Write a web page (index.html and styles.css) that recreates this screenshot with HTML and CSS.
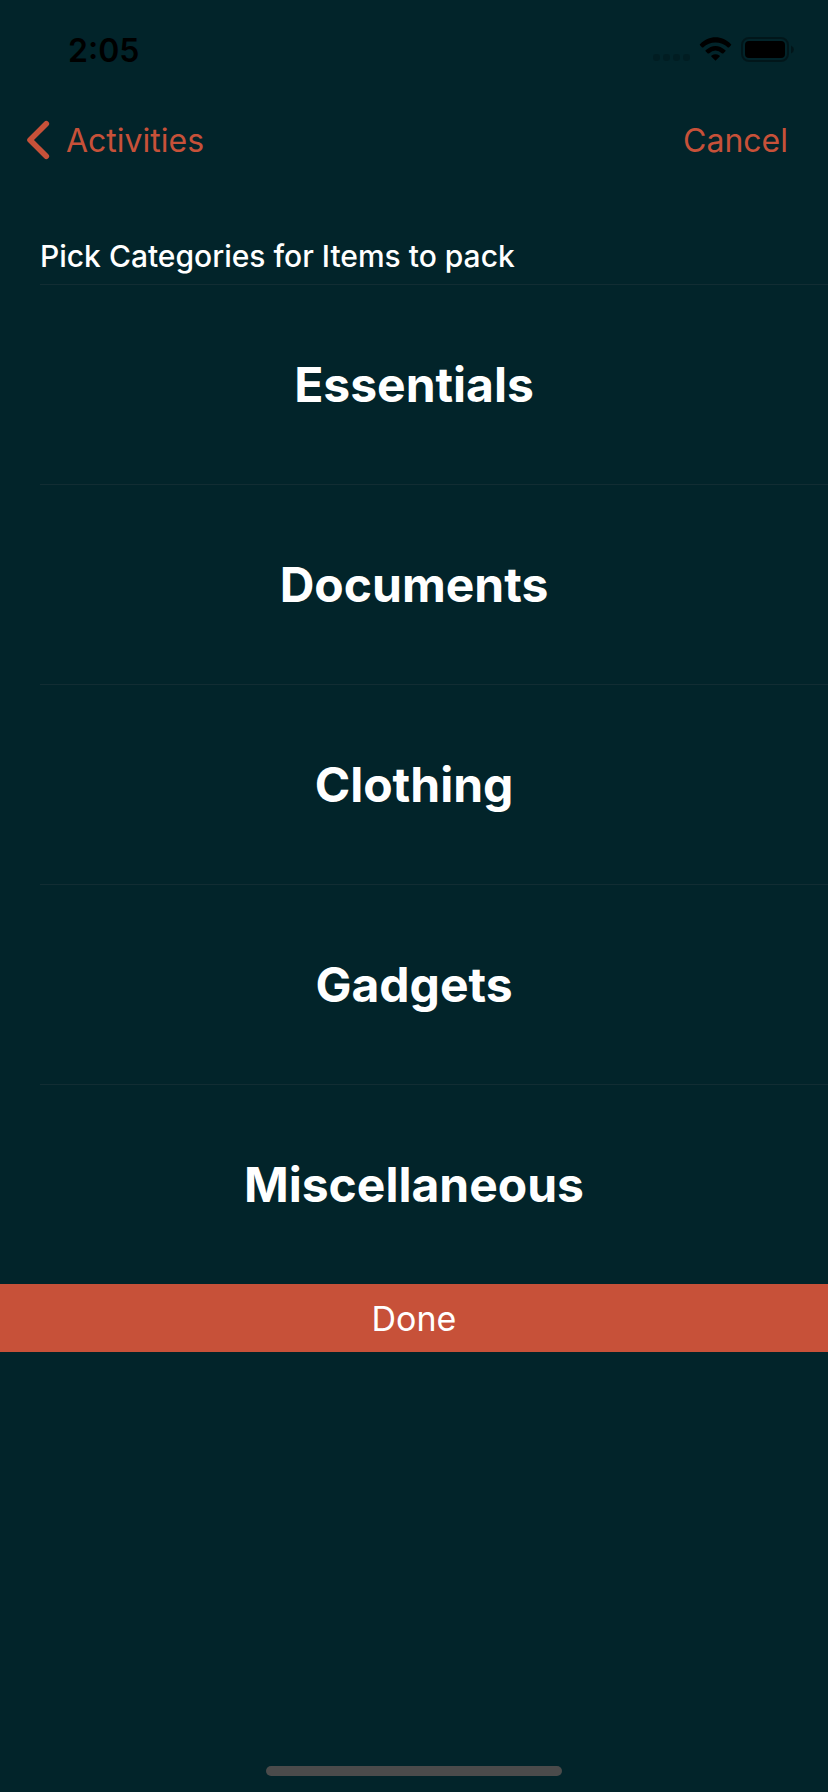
FILE: index.html
```html
<!DOCTYPE html>
<html lang="en">
<head>
<meta charset="utf-8">
<meta name="viewport" content="width=device-width, initial-scale=1">
<title>Pick Categories</title>
<link rel="stylesheet" href="styles.css">
</head>
<body>
<div class="screen">
  <header class="status">
    <time class="clock">2:05</time>
    <svg class="status-icons" width="142" height="28" viewBox="0 0 142 28" aria-hidden="true">
      <g fill="#000" fill-opacity=".18">
        <rect x="1" y="18" width="7" height="7" rx="2.4"/>
        <rect x="11" y="18" width="7" height="7" rx="2.4"/>
        <rect x="21" y="18" width="7" height="7" rx="2.4"/>
        <rect x="31" y="18" width="7" height="7" rx="2.4"/>
      </g>
      <path d="M63.5 24.8 59.3 20.6Q58.9 20 59.6 19.6Q63.5 16.8 67.4 19.6Q68.1 20 67.7 20.6Z"/>
      <path d="M53.6 14.3Q63.5 5.8 73.4 14.3Q73.9 14.8 73.4 15.3L71.2 17.4Q70.7 17.8 70.1 17.4Q63.5 11.8 56.9 17.4Q56.3 17.8 55.8 17.4L53.6 15.3Q53.1 14.8 53.6 14.3Z"/>
      <path d="M48 8.2C56.6-1.1 70.4-1.1 79 8.2Q79.5 8.7 79 9.2L76.9 11.4Q76.4 11.8 75.9 11.4C69 4.8 58 4.8 51.1 11.4Q50.6 11.8 50.1 11.4L48 9.2Q47.5 8.7 48 8.2Z"/>
      <rect x="90" y="2" width="46" height="23" rx="7" fill="none" stroke="#000" stroke-opacity=".38" stroke-width="2"/>
      <rect x="93" y="5" width="40" height="17" rx="4"/>
      <path d="M139 9.5Q142 11 142 13.5Q142 16 139 17.5Z" fill-opacity=".4"/>
    </svg>
  </header>
  <nav class="navbar">
    <button class="nav-button" type="button">
      <svg width="24" height="40" viewBox="0 0 24 40" aria-hidden="true"><path d="M20.300 3.700 4 20 20.300 36.300" fill="none" stroke="currentColor" stroke-width="5.600" stroke-linecap="round" stroke-linejoin="round"/></svg>
      <span>Activities</span>
    </button>
    <button class="nav-button" type="button">Cancel</button>
  </nav>
  <main>
    <h1 class="title">Pick Categories for Items to pack</h1>
    <ul class="categories">
      <li><button class="category" type="button">Essentials</button></li>
      <li><button class="category" type="button">Documents</button></li>
      <li><button class="category" type="button">Clothing</button></li>
      <li><button class="category" type="button">Gadgets</button></li>
      <li><button class="category" type="button">Miscellaneous</button></li>
    </ul>
    <button class="done" type="button">Done</button>
  </main>
  <div class="home-indicator"></div>
</div>
</body>
</html>
```
FILE: styles.css
```css
* {
  box-sizing: border-box;
}

body {
  margin: 0;
  background: #02242a;
  color: #fff;
  font-family: Inter, "Liberation Sans", sans-serif;
}

button {
  margin: 0;
  padding: 0;
  border: 0;
  background: none;
  color: inherit;
  font: inherit;
  cursor: pointer;
}

.screen {
  display: flex;
  flex-direction: column;
  min-height: 100vh;
}

.status {
  display: flex;
  justify-content: space-between;
  align-items: center;
  height: 100px;
  padding: 0 34px 0 68px;
  color: #000;
}

.clock {
  font-size: 32px;
  font-weight: 600;
}

.navbar {
  display: flex;
  justify-content: space-between;
  align-items: center;
  height: 80px;
  padding: 0 40px 0 26px;
  color: #c75139;
  font-size: 32px;
}

.nav-button {
  display: flex;
  align-items: center;
  gap: 16px;
}

.title {
  margin: 0;
  padding: 56px 40px 8px;
  font-size: 30px;
  font-weight: 500;
  line-height: 40px;
}

.categories {
  margin: 0 0 0 40px;
  padding: 0;
  border-top: 1px solid #122d33;
  list-style: none;
}

.categories li + li {
  border-top: 1px solid #122d33;
}

.category {
  display: block;
  width: 100%;
  height: 199px;
  padding-right: 40px;
  font-size: 48px;
  font-weight: 700;
}

.done {
  display: block;
  width: 100%;
  height: 68px;
  background: #c75139;
  font-size: 34px;
}

.home-indicator {
  width: 296px;
  height: 10px;
  margin: auto auto 16px;
  border-radius: 5px;
  background: #4b4b4b;
}
```
